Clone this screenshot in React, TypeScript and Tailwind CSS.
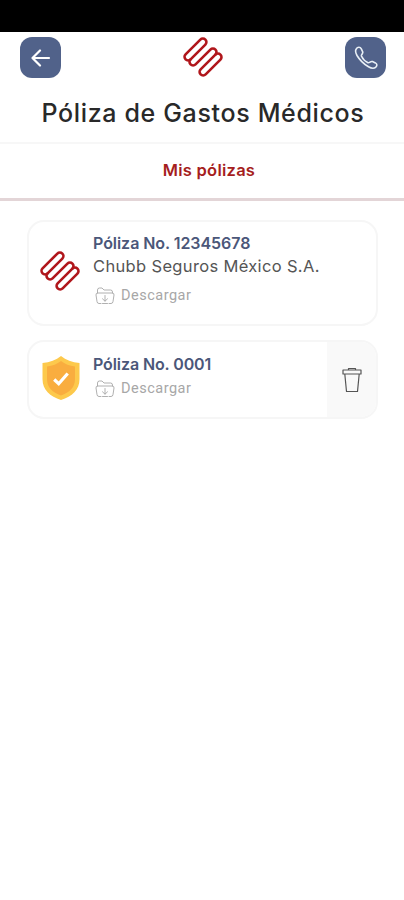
import React from 'react';

interface IconProps {
  className?: string;
}

function Logo({ className }: IconProps) {
  return (
    <svg className={className} viewBox="0 0 40 40" fill="none" stroke="#b0161b" strokeWidth={2.6} strokeLinecap="round">
      <g transform="rotate(-45 20 20)">
        <rect x="6" y="5.8" width="28" height="7.1" rx="3.55" />
        <path d="M9.5 12.9A3.55 3.55 0 0 0 9.5 20H30.5A3.55 3.55 0 0 1 30.5 27.1" />
        <rect x="6" y="27.1" width="28" height="7.1" rx="3.55" />
      </g>
    </svg>
  );
}

function PhoneIcon({ className }: IconProps) {
  return (
    <svg className={className} viewBox="0 0 24 24" fill="none" stroke="currentColor" strokeWidth={1.6} strokeLinejoin="round">
      <path d="M2.2 3C3.6 .7 6.3 .8 7.3 2.8L8.7 5.8C9.4 7.6 7 8.6 7.4 10C8.6 12.6 11.4 15.5 14 16.7C15.6 17.2 16.6 14.8 18.5 15.6L21.4 16.9C23.3 17.9 23.4 20 21.6 21.3C19.8 22.8 17.1 22.3 14.5 20.8C9.9 18.1 5.5 13.7 3 9.5C1.5 6.8 1 4.8 2.2 3Z" />
    </svg>
  );
}

function FolderIcon({ className }: IconProps) {
  return (
    <svg className={className} viewBox="0 0 20 18" fill="none" stroke="currentColor" strokeWidth={0.9} strokeLinejoin="round" strokeLinecap="round">
      <path d="M2.5 6V3Q2.5 1 4.5 1H7L9 3H15.5Q17.5 3 17.5 5V6" />
      <path d="M6 16.5H4Q2.2 16.5 2 14.5L1 8Q.8 6 2.8 6H17.2Q19.2 6 19 8L18 14.5Q17.8 16.5 16 16.5H14" />
      <path d="M10 8.5V14M7.5 11.8L10 14.2L12.5 11.8M7.5 16.5H12.5" />
    </svg>
  );
}

function ShieldIcon({ className }: IconProps) {
  return (
    <svg className={className} viewBox="0 0 38 44">
      <path d="M19 0C14 4 8 6.5.5 7V23C.5 34 8 40.5 19 44C30 40.5 37.5 34 37.5 23V7C30 6.5 24 4 19 0Z" fill="#fdc94c" />
      <path d="M19 5C15 8 10.5 10 5 10.5V23C5 31.5 10.5 36.5 19 39.5C27.5 36.5 33 31.5 33 23V10.5C27.5 10 23 8 19 5Z" fill="#f9ad3f" />
      <path d="M12.2 23.5L16.7 27.7L25.7 17.5" fill="none" stroke="white" strokeWidth={3.2} />
    </svg>
  );
}

function TrashIcon({ className }: IconProps) {
  return (
    <svg className={className} viewBox="0 0 20 26" fill="none" stroke="currentColor" strokeWidth={1.2} strokeLinejoin="round">
      <path d="M6.5 3V1.5H13.5V3M1 3H19V7H1ZM2.8 7L4.5 24.5H15.5L17.2 7" />
    </svg>
  );
}

function Download() {
  return (
    <button className="flex items-center gap-[6px] pl-[2px] font-[Roboto] text-[14.5px] leading-5 tracking-[0.5px] text-[#a7a7a7]">
      <FolderIcon className="h-[18px] w-5" />
      Descargar
    </button>
  );
}

export default function App() {
  return (
    <div className="min-h-[900px] w-full bg-white font-[Inter,sans-serif]">
      <div className="h-8 bg-black" />
      <header className="flex h-[51px] items-start justify-between pt-[5px] pr-[18px] pl-5">
        <button aria-label="Regresar" className="flex h-[41px] w-[41px] items-center justify-center rounded-[12px] bg-[#51628a] text-white">
          <svg className="h-[18px] w-5" viewBox="0 0 20 18" fill="none" stroke="currentColor" strokeWidth={2.2} strokeLinecap="round" strokeLinejoin="round">
            <path d="M9 1.5L1.5 9L9 16.5M1.5 9H18" />
          </svg>
        </button>
        <Logo className="h-10 w-10" />
        <button aria-label="Llamar" className="flex h-[41px] w-[41px] items-center justify-center rounded-[12px] bg-[#51628a] text-[#e9f0f6]">
          <PhoneIcon className="h-6 w-6" />
        </button>
      </header>
      <h1 className="flex h-[61px] items-center justify-center border-b-2 border-[#f7f7f7] pt-[3px] pl-[2px] text-[25px] font-medium tracking-[0.65px] whitespace-nowrap text-[#292929]">
        Póliza de Gastos Médicos
      </h1>
      <div className="flex h-[57px] items-center justify-center border-b-[3px] border-[#e3d5d7] pb-[2px] pl-[14px] text-[16.5px] font-semibold tracking-[0.25px] text-[#a51d20]">
        Mis pólizas
      </div>

      <main className="flex flex-col gap-[14px] pt-[19px] pr-[26px] pl-[27px]">
        <section className="flex h-[106px] rounded-[17px] border-2 border-[#f6f6f6] pl-[11px]">
          <Logo className="mt-[29px] h-10 w-10" />
          <div className="ml-[13px] pt-[10px]">
            <h2 className="text-[16px] leading-[22px] font-semibold tracking-[-0.05px] text-[#4b5779]">Póliza No. 12345678</h2>
            <p className="text-[16.5px] leading-6 tracking-[0.34px] text-[#555]">Chubb Seguros México S.A.</p>
            <div className="mt-2"><Download /></div>
          </div>
        </section>
        <section className="flex h-[79px] overflow-hidden rounded-[17px] border-2 border-[#f6f6f6] pl-[13px]">
          <ShieldIcon className="mt-[14px] h-11 w-[38px]" />
          <div className="ml-[13px] pt-[11px]">
            <h2 className="text-[16px] leading-[22px] font-semibold tracking-[-0.1px] text-[#4b5779]">Póliza No. 0001</h2>
            <div className="mt-1"><Download /></div>
          </div>
          <button aria-label="Eliminar" className="ml-auto flex w-[49px] items-center justify-center bg-[#f9f9f9] text-[#555]">
            <TrashIcon className="h-[26px] w-5" />
          </button>
        </section>
      </main>
    </div>
  );
}
